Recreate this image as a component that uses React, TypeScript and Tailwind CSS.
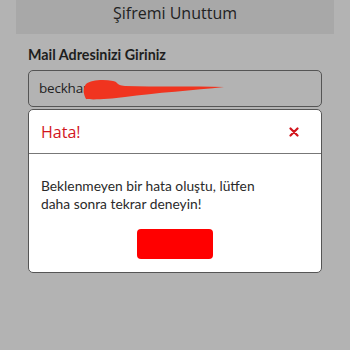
export default function App() {
  return (
    <div className="w-[350px] h-[350px] bg-[#b3b3b3] overflow-hidden font-['Open_Sans',sans-serif]">
      <div className="mx-4 h-[34px] bg-[#a8a8a8] flex justify-center pt-[2px]">
        <span className="text-[16px] leading-[22px] text-[#222]">Şifremi Unuttum</span>
      </div>

      <div className="px-7 pt-[11px]">
        <div className="font-['Lato',sans-serif] text-[14.3px] leading-[20px] font-bold text-[#1e1e1e]">
          Mail Adresinizi Giriniz
        </div>

        <div className="relative mt-[5px] h-[37px] rounded-[5px] border border-[#555] flex items-center pl-[10px]">
          <span className="text-[13.5px] tracking-[-0.2px] text-[#222]">beckhar</span>
          <svg className="absolute left-[54px] top-[8px]" width="142" height="22" viewBox="0 0 142 22">
            <path
              d="M3 5 C 8 1, 20 0, 30 2 C 36 3, 32 6, 42 7 C 72 8, 110 7, 141 8 C 112 11, 72 14, 42 18 C 26 20, 10 21, 3 20 C 0 15, 0 9, 3 5 Z"
              fill="#f0341f"
            />
          </svg>
        </div>

        <div className="mt-[2px] h-[164px] bg-white rounded-[5px] border border-[#555] flex flex-col">
          <div className="h-[44px] shrink-0 flex items-center justify-between pl-[12px] pr-[22px] border-b border-[#777]">
            <span className="text-[16px] text-[#d2151d]">Hata!</span>
            <svg width="10" height="10" viewBox="0 0 10 10">
              <path d="M1.5 1.5 L8.5 8.5 M8.5 1.5 L1.5 8.5" stroke="#d2151d" strokeWidth="2.2" strokeLinecap="round" />
            </svg>
          </div>
          <div className="pl-[12px] pt-[23px] font-['Lato',sans-serif] text-[13.8px] leading-[18px] text-[#2a2a2a]">
            <div>Beklenmeyen bir hata oluştu, lütfen</div>
            <div>daha sonra tekrar deneyin!</div>
          </div>
          <div className="flex justify-center mt-[16px]">
            <button className="w-[76px] h-[30px] rounded-[4px] bg-[#ff0000]"></button>
          </div>
        </div>
      </div>
    </div>
  );
}
